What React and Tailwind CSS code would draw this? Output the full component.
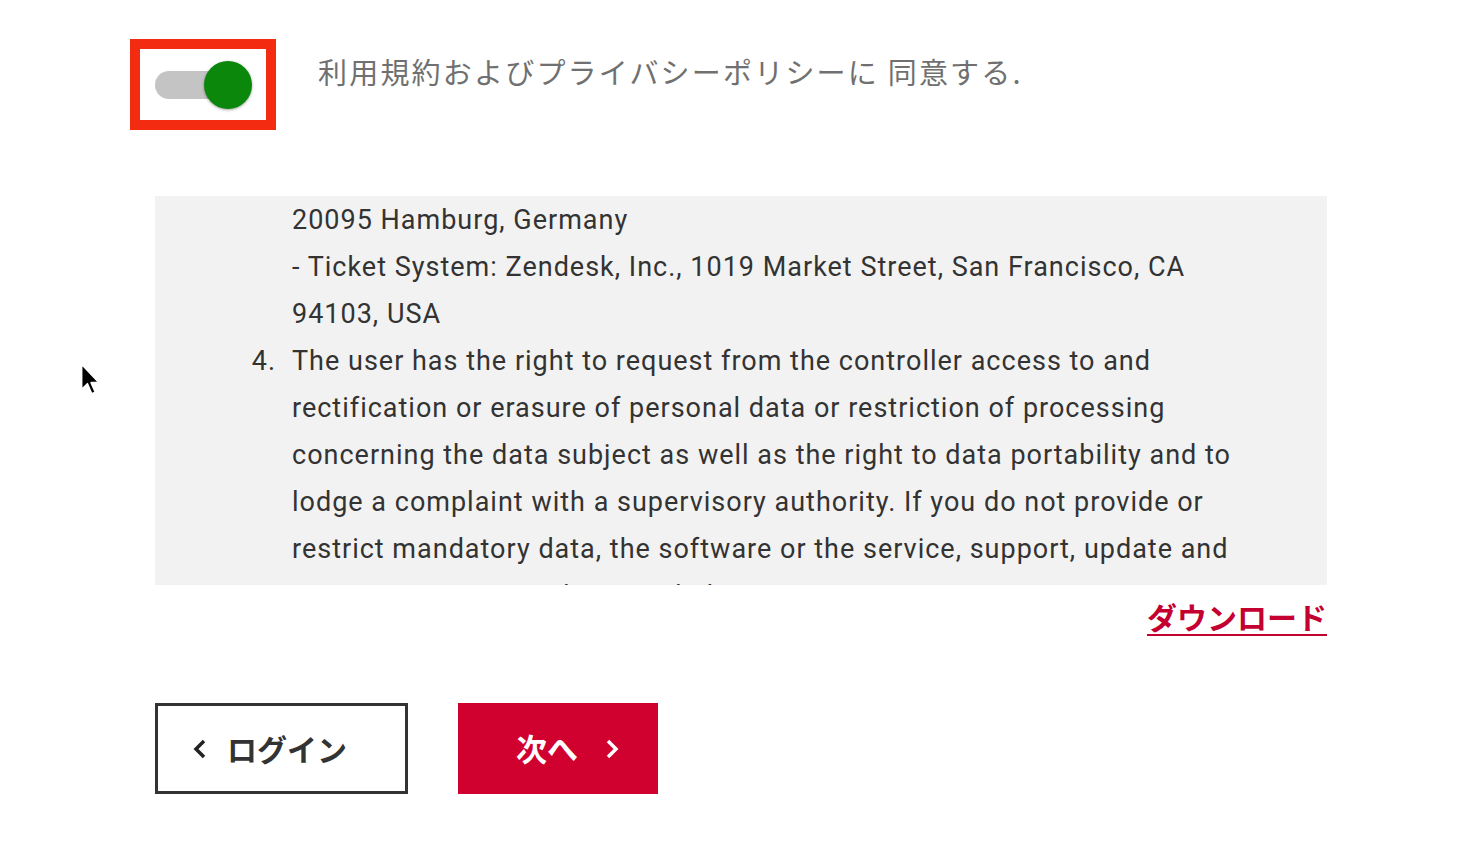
import React from 'react';

const lines = [
  { text: '20095 Hamburg, Germany' },
  { text: '- Ticket System: Zendesk, Inc., 1019 Market Street, San Francisco, CA' },
  { text: '94103, USA' },
  { num: '4.', text: 'The user has the right to request from the controller access to and' },
  { text: 'rectification or erasure of personal data or restriction of processing' },
  { text: 'concerning the data subject as well as the right to data portability and to' },
  { text: 'lodge a complaint with a supervisory authority. If you do not provide or' },
  { text: 'restrict mandatory data, the software or the service, support, update and' },
  { text: 'maintenance cannot be provided.' },
];

const Cursor = () => (
  <svg width="24" height="36" viewBox="0 0 22 34" className="absolute left-[77px] top-[361px]">
    <path d="M4 3 L4 27 L9.5 21.5 L13.5 31 L17 29.5 L13 20.5 L20.5 20.5 Z" fill="#000" stroke="#fff" strokeWidth="1.6" strokeLinejoin="round" />
  </svg>
);

const App = () => {
  return (
    <div className="relative w-[1480px] h-[856px] bg-white overflow-hidden font-['Roboto','Noto_Sans_CJK_JP',sans-serif]">
      <Cursor />

      <div className="pl-[130px] pt-[39px] flex items-start">
        <div className="w-[146px] h-[91px] border-[10px] border-[#f32b11] flex items-center justify-center">
          <div className="relative w-[97px] h-[48px] flex items-center">
            <div className="w-[86px] h-[28px] rounded-full bg-[#c4c4c4]" />
            <div className="absolute right-0 top-0 w-[48px] h-[48px] rounded-full bg-[#0b870b] shadow-[0_1px_3px_rgba(0,0,0,0.35)]" />
          </div>
        </div>
        <p className="ml-[42px] mt-[12px] text-[29px] leading-[40px] tracking-[2.2px] text-[#707070] font-['Noto_Sans_CJK_JP',sans-serif] font-normal">
          利用規約およびプライバシーポリシーに 同意する.
        </p>
      </div>

      <div className="ml-[155px] mt-[66px] w-[1172px] h-[389px] bg-[#f2f2f2] overflow-hidden">
        <div className="pt-[1px]">
          {lines.map((line, i) => (
            <div key={i} className="flex h-[47px] items-center text-[27px] tracking-[1px] text-[#333] whitespace-nowrap">
              <span className="w-[137px] shrink-0 text-right pr-[16px]">{line.num}</span>
              <span>{line.text}</span>
            </div>
          ))}
        </div>
      </div>

      <div className="w-[1327px] flex justify-end mt-[11px]">
        <a href="#" className="text-[30px] leading-[40px] font-bold text-[#c3002f] underline decoration-[2px] underline-offset-[5px] font-['Noto_Sans_CJK_JP',sans-serif]">
          ダウンロード
        </a>
      </div>

      <div className="ml-[155px] mt-[67px] flex gap-[50px] font-['Noto_Sans_CJK_JP',sans-serif]">
        <button className="w-[253px] h-[91px] border-[3px] border-[#333] bg-white flex items-center pl-[34px] text-[30px] font-bold text-[#333]">
          <svg width="16" height="24" viewBox="0 0 16 24" className="mr-[19px]">
            <path d="M12 4 L4 12 L12 20" fill="none" stroke="#222" strokeWidth="3.5" />
          </svg>
          ログイン
        </button>
        <button className="w-[200px] h-[91px] bg-[#d0002f] flex items-center pl-[58px] text-[31px] font-bold text-white">
          次へ
          <svg width="16" height="24" viewBox="0 0 16 24" className="ml-[26px]">
            <path d="M4 4 L12 12 L4 20" fill="none" stroke="#fff" strokeWidth="3.5" />
          </svg>
        </button>
      </div>
    </div>
  );
};

export default App;
